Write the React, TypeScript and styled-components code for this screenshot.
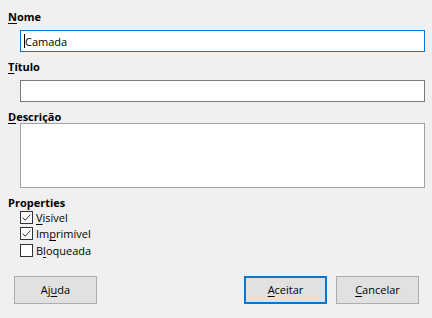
import styled, { createGlobalStyle } from "styled-components";

const Global = createGlobalStyle`
  html, body {
    margin: 0;
    padding: 0;
    background: #f0f0f0;
  }
  body {
    font-family: "Open Sans", "Noto Sans", sans-serif;
    font-size: 11px;
    color: #000;
  }
`;

const Dialog = styled.div`
  width: 432px;
  height: 318px;
  box-sizing: border-box;
  padding: 9px 7px 0 8px;
  display: flex;
  flex-direction: column;
`;

const Label = styled.div<{ $gap: number; $top?: number }>`
  font-weight: 700;
  line-height: 16px;
  height: 16px;
  margin-top: ${(p) => p.$top ?? 0}px;
  margin-bottom: ${(p) => p.$gap}px;
`;

const Key = styled.span`
  text-decoration: underline;
  text-underline-offset: 2px;
`;

const Input = styled.div<{ $focused?: boolean }>`
  margin-left: 12px;
  height: 22px;
  box-sizing: border-box;
  background: #fff;
  border: 1px solid ${(p) => (p.$focused ? "#0078d7" : "#7a7a7a")};
  display: flex;
  align-items: center;
  padding-left: 3px;
  font-size: 11px;
`;

const Caret = styled.span`
  display: inline-block;
  width: 1px;
  height: 14px;
  background: #000;
`;

const TextArea = styled.div`
  margin-left: 12px;
  height: 65px;
  box-sizing: border-box;
  background: #fff;
  border: 1px solid #a0a0a0;
`;

const Checks = styled.div`
  display: flex;
  flex-direction: column;
  padding-left: 12px;
  margin-top: -2px;
`;

const CheckRow = styled.label`
  display: flex;
  align-items: center;
  height: 16.5px;
  gap: 3px;
`;

const Box = styled.span`
  width: 13px;
  height: 13px;
  box-sizing: border-box;
  border: 1px solid #333;
  background: #fff;
  display: flex;
  align-items: center;
  justify-content: center;
`;

const Buttons = styled.div`
  margin: 17px 6px 0 6px;
  display: flex;
  align-items: center;
`;

const Spacer = styled.div`
  flex: 1;
`;

const Button = styled.button<{ $primary?: boolean }>`
  width: 83px;
  height: 28px;
  box-sizing: border-box;
  background: #e1e1e1;
  border: ${(p) => (p.$primary ? "2px solid #0078d7" : "1px solid #adadad")};
  font-family: inherit;
  font-size: 11px;
  color: #000;
  padding: 0;
  margin: 0;
  & + & {
    margin-left: 9px;
  }
`;

function Check({ checked, children }: { checked?: boolean; children: React.ReactNode }) {
  return (
    <CheckRow>
      <Box>
        {checked && (
          <svg width="11" height="11" viewBox="0 0 11 11">
            <path d="M1.5 5.5 L4.2 8.2 L9.5 2.5" fill="none" stroke="#333" strokeWidth="1" />
          </svg>
        )}
      </Box>
      <span>{children}</span>
    </CheckRow>
  );
}

export default function App() {
  return (
    <>
      <Global />
      <Dialog>
        <Label $gap={5}>
          <Key>N</Key>ome
        </Label>
        <Input $focused>
          <Caret />
          Camada
        </Input>
        <Label $gap={5} $top={7}>
          <Key>T</Key>ítulo
        </Label>
        <Input />
        <Label $gap={-2} $top={7}>
          <Key>D</Key>escrição
        </Label>
        <TextArea />
        <Label $gap={0} $top={7}>
          Properties
        </Label>
        <Checks>
          <Check checked>
            <Key>V</Key>isível
          </Check>
          <Check checked>
            Im<Key>p</Key>rimível
          </Check>
          <Check>
            B<Key>l</Key>oqueada
          </Check>
        </Checks>
        <Buttons>
          <Button>
            Aj<Key>u</Key>da
          </Button>
          <Spacer />
          <Button $primary>
            <Key>A</Key>ceitar
          </Button>
          <Button>
            <Key>C</Key>ancelar
          </Button>
        </Buttons>
      </Dialog>
    </>
  );
}
